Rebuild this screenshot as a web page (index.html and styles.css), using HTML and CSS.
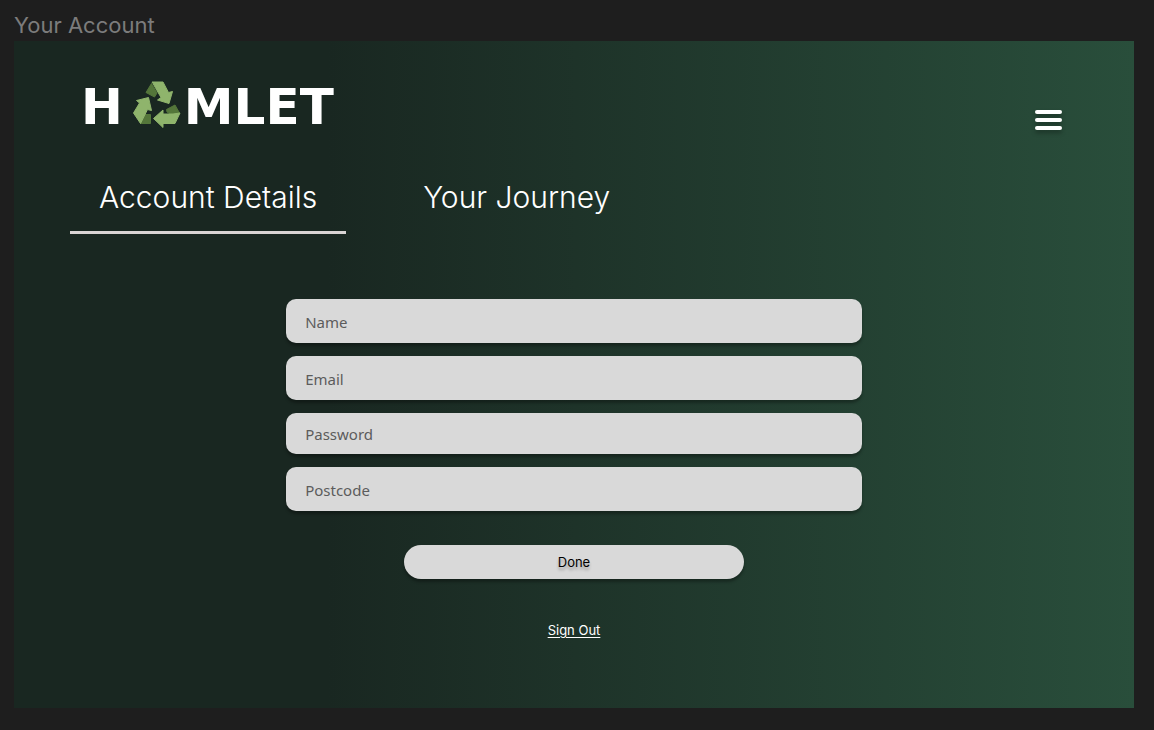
FILE: index.html
```html
<!DOCTYPE html>
<html lang="en">
<head>
<meta charset="utf-8">
<meta name="viewport" content="width=device-width, initial-scale=1">
<title>Your Account</title>
<link rel="stylesheet" href="styles.css">
</head>
<body>
<p class="frame-label">Your Account</p>
<div class="screen">
  <header class="header">
    <h1 class="logo" aria-label="Hamlet">
      <span class="logo-text">H</span>
      <svg class="logo-mark" viewBox="0 0 48 48" aria-hidden="true">
        <g fill="#54763a" stroke="#54763a" stroke-linejoin="round">
          <path d="M18.500 2.500 13 11.500 21.500 16 24 12Z"/>
          <path d="M33.500 28.500 42 24 46.500 32 40 34.500 34 31Z"/>
          <path d="M12 33.500 17.500 33.500 17.500 42.500 7.500 42.500Z"/>
        </g>
        <g fill="#8fb46c" stroke="#8fb46c" stroke-linejoin="round">
          <path d="M19 1 30 1 35.500 11.500 39.500 10.500 36 22.500 24.500 19 28 16.500 20 2.500Z"/>
          <path d="M47 32 42 42.500 30 42.500 30 46.500 20.500 37.500 30 29 30 33 40 33Z"/>
          <path d="M7.500 42.500 .5 32 6.500 22 3.500 19.500 15.500 16.500 18.500 29.500 14.500 28.500Z"/>
        </g>
      </svg>
      <span class="logo-text">MLET</span>
    </h1>
    <button class="menu" type="button" aria-label="Open menu">
      <span class="menu-bar"></span>
      <span class="menu-bar"></span>
      <span class="menu-bar"></span>
    </button>
  </header>
  <nav class="tabs">
    <a class="tab tab-active" href="#details" aria-current="page">Account Details</a>
    <a class="tab" href="#journey">Your Journey</a>
  </nav>
  <main class="content">
    <form class="form">
      <input class="field" type="text" name="name" placeholder="Name" aria-label="Name">
      <input class="field" type="email" name="email" placeholder="Email" aria-label="Email">
      <input class="field field-short" type="password" name="password" placeholder="Password" aria-label="Password">
      <input class="field" type="text" name="postcode" placeholder="Postcode" aria-label="Postcode">
      <button class="done" type="submit">Done</button>
    </form>
    <a class="sign-out" href="#sign-out">Sign Out</a>
  </main>
</div>
</body>
</html>
```
FILE: styles.css
```css
* {
  box-sizing: border-box;
}

body {
  display: flex;
  flex-direction: column;
  min-height: 100vh;
  margin: 0;
  padding: 9px 20px 22px 14px;
  background: #1e1e1e;
  font-family: Inter, "Liberation Sans", sans-serif;
}

.frame-label {
  margin: 0;
  color: #7c7c7c;
  font-size: 22px;
  line-height: 32px;
}

.screen {
  flex: 1;
  background: linear-gradient(90deg, #192721 28%, #294e3b 100%);
}

.header {
  display: flex;
  justify-content: space-between;
  padding: 36px 72px 0 67px;
}

.logo {
  display: flex;
  align-items: center;
  margin: 0;
  color: #fff;
  font-family: "DejaVu Sans", sans-serif;
  font-size: 50px;
  font-weight: 700;
  line-height: 52px;
}

.logo-text {
  padding-top: 4px;
}

.logo-mark {
  width: 48px;
  height: 48px;
  margin: 0 3px 0 10px;
}

.menu {
  display: flex;
  flex-direction: column;
  gap: 4px;
  align-self: flex-end;
  margin-bottom: 3px;
  padding: 0;
  border: 0;
  background: none;
  filter: drop-shadow(0 3px 2px rgba(0, 0, 0, 0.3));
}

.menu-bar {
  width: 27px;
  height: 4px;
  border-radius: 2px;
  background: #fff;
}

.tabs {
  display: flex;
  gap: 48px;
  padding: 44px 56px 0;
}

.tab {
  padding: 0 29px 14px;
  border-bottom: 3px solid transparent;
  color: #fff;
  font-size: 30px;
  font-weight: 300;
  line-height: 40px;
  text-decoration: none;
}

.tab-active {
  border-color: #d9d4d4;
}

.content {
  display: flex;
  flex-direction: column;
  align-items: center;
  padding-top: 65px;
}

.form {
  display: flex;
  flex-direction: column;
  gap: 13px;
  width: 51.4%;
}

.field {
  width: 100%;
  height: 44px;
  padding: 2px 19px 0;
  border: 0;
  border-radius: 10px;
  background: #d9d9d9;
  box-shadow: 0 3px 3px rgba(0, 0, 0, 0.3);
  color: #222;
  font-family: "Noto Sans", sans-serif;
  font-size: 15px;
}

.field-short {
  height: 41px;
  padding-top: 0;
}

.field::placeholder {
  color: #5c5c5c;
}

.done {
  align-self: center;
  width: 59%;
  height: 34px;
  margin-top: 21px;
  border: 0;
  border-radius: 17px;
  background: #d9d9d9;
  box-shadow: 0 3px 3px rgba(0, 0, 0, 0.3);
  color: #000;
  font-family: inherit;
  font-size: 13px;
  text-shadow: 0 3px 3px rgba(0, 0, 0, 0.3);
}

.sign-out {
  margin-top: 42px;
  color: #fff;
  font-size: 13px;
  line-height: 18px;
  text-underline-offset: 2px;
}
```
